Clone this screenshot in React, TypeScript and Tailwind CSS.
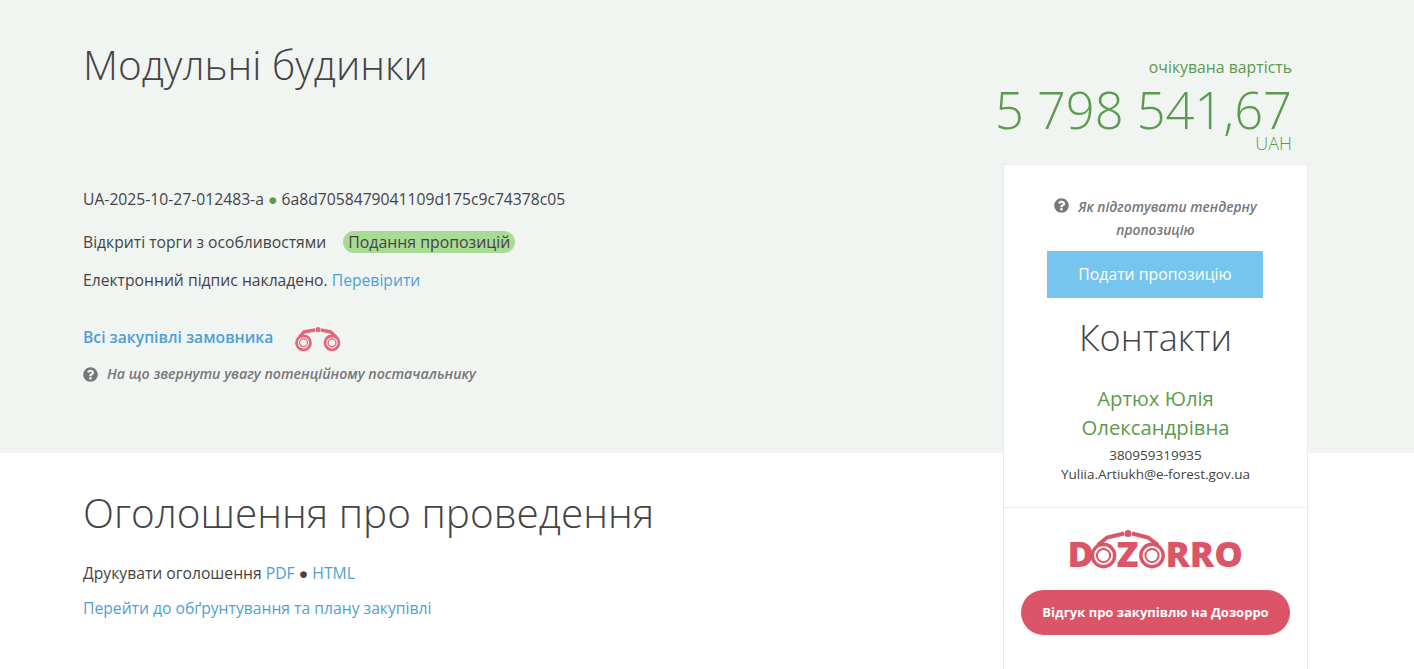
import React from "react";
import { FaQuestionCircle } from "react-icons/fa";

const Binoculars = ({ className = "" }: { className?: string }) => (
  <svg viewBox="0 0 46 24" className={className} aria-hidden="true">
    <g fill="none" stroke="#e2677c">
      <circle cx="8.5" cy="15.8" r="7" strokeWidth="2.8" />
      <circle cx="8.5" cy="15.8" r="3.9" strokeWidth="1.3" />
      <circle cx="37" cy="15.8" r="7" strokeWidth="2.8" />
      <circle cx="37" cy="15.8" r="3.9" strokeWidth="1.3" />
      <path d="M4.5 10 9 4.8 20 3M41 10 35.5 4.8 26 3" strokeWidth="3.4" />
    </g>
    <circle cx="23" cy="2.6" r="2.6" fill="#e2677c" />
  </svg>
);

const LogoGraphic = () => (
  <svg viewBox="0 0 74 39" className="absolute left-[23px] top-0 w-[74px] h-[39px]" aria-hidden="true">
    <g fill="none" stroke="#dc5468">
      <circle cx="12.5" cy="25.5" r="11.2" strokeWidth="3.4" />
      <circle cx="12.5" cy="25.5" r="6.6" strokeWidth="2" />
      <circle cx="61" cy="25.5" r="11.2" strokeWidth="3.4" />
      <circle cx="61" cy="25.5" r="6.6" strokeWidth="2" />
      <path d="M7 15 16 7.5 33 3.5M67 15 57 7.5 41 3.5" strokeWidth="4" />
    </g>
    <circle cx="37" cy="3.5" r="3.5" fill="#dc5468" />
  </svg>
);

export default function App() {
  return (
    <div className="h-[669px] overflow-hidden bg-[linear-gradient(#f0f5f2_453px,#ffffff_453px)] font-['Open_Sans',sans-serif] text-[#444] flex justify-between pl-[83px] pr-[106px]">
      <main className="w-[700px] flex flex-col">
        <h1 className="mt-[36px] text-[40.5px] leading-[58px] font-light">Модульні будинки</h1>
        <div className="mt-[93px] text-[15.7px] leading-[24px] whitespace-nowrap">
          UA-2025-10-27-012483-a <span className="text-[#5d9a4f]">●</span> 6a8d7058479041109d175c9c74378c05
        </div>
        <div className="mt-[19px] flex items-center text-[15.7px] leading-[24px]">
          <span>Відкриті торги з особливостями</span>
          <span className="ml-[17px] px-[5px] h-[22px] leading-[22px] text-[15.85px] rounded-[11px] bg-[#a8dc95]">Подання пропозицій</span>
        </div>
        <div className="mt-[14px] text-[15.7px] leading-[24px]">
          Електронний підпис накладено. <a className="text-[#4f9fd4]">Перевірити</a>
        </div>
        <div className="mt-[31px] flex items-center h-[30px]">
          <a className="text-[15.7px] font-semibold text-[#4f9fd4]">Всі закупівлі замовника</a>
          <Binoculars className="ml-[22px] w-[46px] h-[24px] mt-[2px]" />
        </div>
        <div className="mt-[10px] flex items-center text-[14.2px] leading-[22px] italic font-semibold text-[#777]">
          <FaQuestionCircle className="w-[15px] h-[15px] mr-[9px]" color="#777" />
          На що звернути увагу потенційному постачальнику
        </div>
        <h2 className="mt-[99px] text-[40.5px] leading-[58px] font-light">Оголошення про проведення</h2>
        <div className="mt-[19px] text-[15.7px] leading-[24px]">
          Друкувати оголошення <a className="text-[#4f9fd4]">PDF</a> ● <a className="text-[#4f9fd4]">HTML</a>
        </div>
        <a className="mt-[11px] text-[15.7px] leading-[24px] text-[#4f9fd4]">Перейти до обґрунтування та плану закупівлі</a>
      </main>

      <aside className="w-[305px] flex flex-col items-stretch">
        <div className="mt-[55px] pr-[16px] text-right text-[#5d9a4f]">
          <div className="text-[15.8px] leading-[24px]">очікувана вартість</div>
          <div className="mt-[8px] -ml-[20px] text-[50.6px] leading-[46px] font-light whitespace-nowrap">5 798 541,67</div>
          <div className="mt-[2px] text-[18px] leading-[16px] font-light">UAH</div>
        </div>
        <div className="mt-[13px] min-h-[520px] bg-white border border-[#eaeaea] rounded-[2px] flex flex-col">
          <div className="px-[40px] pt-[30px] pb-[23px] border-b border-[#eaeaea] flex flex-col items-center text-center">
            <div className="text-[13.8px] leading-[23px] italic font-semibold text-[#777]">
              <FaQuestionCircle className="inline-block w-[15px] h-[15px] mr-[9px] align-[-1px]" color="#777" />
              Як підготувати тендерну пропозицію
            </div>
            <a className="mt-[10px] mr-[1px] w-[216px] h-[47px] shrink-0 bg-[#76c5ee] text-white text-[15.8px] flex items-center justify-center">Подати пропозицію</a>
            <div className="mt-[14px] text-[36px] leading-[52px] font-light">Контакти</div>
            <div className="mt-[20px] text-[20.3px] leading-[29px] text-[#5d9a4f]">Артюх Юлія Олександрівна</div>
            <div className="mt-[4px] text-[13.5px] leading-[19px]">380959319935</div>
            <div className="text-[13.5px] leading-[19px] whitespace-nowrap">Yuliia.Artiukh@e-forest.gov.ua</div>
          </div>
          <div className="flex flex-col items-center pt-[22px]">
            <div className="relative flex items-end h-[39px] w-[173px] mr-[3px] text-[36px] leading-[30px] font-extrabold text-[#dc5468]">
              <span className="w-[23px]">D</span>
              <span className="ml-[26px] w-[23px]">Z</span>
              <span className="ml-[27px]">RRO</span>
              <LogoGraphic />
            </div>
            <a className="mt-[21px] w-[269px] h-[45px] shrink-0 rounded-[23px] bg-[#dc5468] text-white text-[13px] font-bold flex items-center justify-center">Відгук про закупівлю на Дозорро</a>
          </div>
        </div>
      </aside>
    </div>
  );
}
